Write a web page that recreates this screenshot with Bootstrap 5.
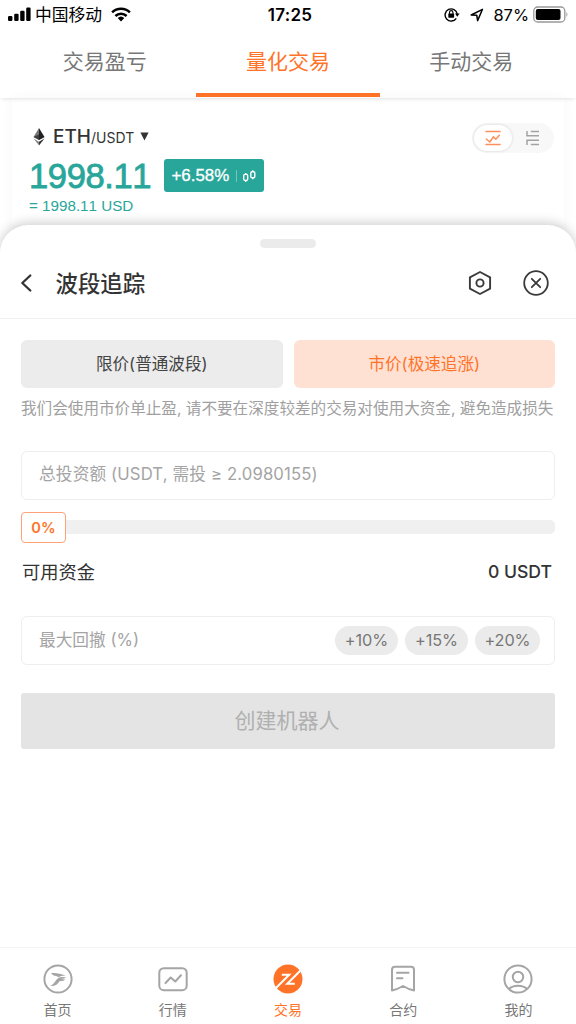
<!DOCTYPE html>
<html lang="zh-CN">
<head>
<meta charset="utf-8">
<meta name="viewport" content="width=device-width, initial-scale=1">
<title>波段追踪</title>
<link href="https://cdn.jsdelivr.net/npm/bootstrap@5.3.0/dist/css/bootstrap.min.css" rel="stylesheet">
<style>
:root{--brand:#ff7329;--up:#29a69a}
html,body{height:100%}
body{font-family:Inter,"Noto Sans CJK SC",sans-serif;color:#333;background:#fff;overflow:hidden}
svg{display:block;flex:none}
.screen{height:1024px;width:576px}
.status{height:29px;color:#000;font-size:17px;line-height:29px;padding:0 7px 0 8px}
.status .side{flex:1 1 0}
.status .clock{font-weight:600;letter-spacing:.25px;padding:1px 0 0 3px}
.status .carrier{margin-left:4px;font-size:16.8px;padding-top:2px}
.status .level{margin-left:9px;font-size:16.4px;padding-top:1px}
.toptabs{height:69px;padding:0 13px;box-shadow:0 3px 4px -2px rgba(0,0,0,.12);z-index:1}
.toptabs a{flex:1 1 0;text-align:center;font:400 21px/63px "Noto Sans CJK SC",sans-serif;color:#777;border-bottom:4px solid transparent;text-decoration:none;height:68px}
.toptabs a.active{color:var(--brand);border-color:var(--brand)}
.quote{height:127px;padding:24px 10px 0 17px;margin:0 12px;box-shadow:0 0 12px rgba(0,0,0,.035)}
.helv{font-family:"Liberation Sans",Arial,sans-serif;font-kerning:none}
.pair{font-size:19px;line-height:26px;font-weight:500}
.pair small{font-size:14px;font-weight:400}
.price{font-size:34.6px;line-height:36px;color:var(--up);letter-spacing:-.4px;-webkit-text-stroke:.8px var(--up);width:134.500px;padding-top:1px}
.change{background:var(--up);color:#fff;width:100px;height:33px;border-radius:3px;font-size:16.9px;padding:1px 7px 0 8px;-webkit-text-stroke:.3px #fff}
.usd{color:var(--up);font-size:15.2px;line-height:20px;padding-top:2px}
.switcher{width:82px;height:30px;border-radius:15px;background:#f8f8f8;margin-top:1px}
.switcher .on{width:38px;height:26px;border-radius:13px;background:#fff;box-shadow:0 0 3px rgba(0,0,0,.16);margin-left:2px}
.sheet{flex:1;background:#fff;border-radius:28px 28px 0 0;box-shadow:0 -2px 12px rgba(0,0,0,.2);z-index:2}
.grip{width:56px;height:8.5px;border-radius:5px;background:#ebebeb;margin:14px auto 0}
.sheet-head{height:71px;border-bottom:1.5px solid #f1f1f1;padding:0 27px 0 20px}
.sheet-head h1{font:500 22.4px/32px "Noto Sans CJK SC",sans-serif;margin:-1px 0 0 21.5px}
.form-area{padding:21px 21px 0}
.mode{height:48.5px;border-radius:6px;background:#ececec;font-size:16.6px;border:0;flex:1;padding:2px 0 0;color:#444}
.mode.active{background:#ffe1d4;color:var(--brand)}
.hint{font-size:15.6px;line-height:24px;color:#a0a0a0;white-space:nowrap;margin:9px 0 30px}
.field{height:48.5px;border:1.5px solid #eee;border-radius:6px;padding:0 14px 0 17px;color:#a4a4a4;font-size:16.7px;line-height:44px}
.invest{letter-spacing:.13px}
.slider{height:31px;margin-top:12px}
.knob{width:45px;height:31px;border:1.3px solid #ffa277;border-radius:4px;color:var(--brand);font-size:14.6px;font-weight:600;line-height:30px;text-align:center}
.track{flex:1;height:14px;background:#f0f0f0;border-radius:0 5px 5px 0}
.funds{height:28px;margin-top:16px;padding:0 3px 0 1px;font-size:18.3px}
.funds strong{font-size:17.6px;font-weight:500}
.retrace{margin-top:29.5px}
.pill{height:28.5px;border-radius:15px;background:#ebebeb;color:#777;line-height:29px;text-align:center;font-size:16.3px;letter-spacing:-.1px;width:63px}
.create{height:56px;background:#e4e4e4;color:#b0b0b0;border:0;border-radius:3px;font-size:21px;width:100%;margin-top:28px;padding:1px 2px 0 0}
.tabbar{height:77px;border-top:1.3px solid #f4f4f4;background:#fff;z-index:3}
.tabbar a{flex:1 1 0;text-decoration:none;color:#777;font-size:14px;line-height:20px;padding-top:15px}
.tabbar a span{margin-top:5px}
.tabbar a svg{color:#a5a5a5}
.tabbar a.active,.tabbar a.active svg{color:var(--brand)}
</style>
</head>
<body>
<div class="screen d-flex flex-column">
  <header class="status d-flex align-items-center">
    <div class="side d-flex align-items-center">
      <svg width="23" height="15" viewBox="0 0 23 15"><g fill="#000"><rect x="0" y="9" width="4.4" height="5" rx="1.2"/><rect x="6.2" y="6.7" width="4.4" height="7.3" rx="1.2"/><rect x="12.2" y="3.8" width="4.4" height="10.2" rx="1.2"/><rect x="18.2" y="0.5" width="4.4" height="13.5" rx="1.2"/></g></svg>
      <span class="carrier">中国移动</span>
      <svg style="margin-left:9px" width="20" height="15" viewBox="0 0 20 15"><g fill="none" stroke="#000" stroke-width="2.5"><path d="M1.1 5.4a12.7 12.7 0 0 1 17.8 0"/><path d="M4.4 9a8 8 0 0 1 11.2 0"/></g><path d="M6.7 11.1a4.8 4.8 0 0 1 6.6 0L10 14.5z"/></svg>
    </div>
    <div class="clock">17:25</div>
    <div class="side d-flex align-items-center justify-content-end">
      <svg width="17" height="15" viewBox="0 0 17 15"><path d="M12.300 11.300A6.1 6.1 0 1 1 13.2 7" fill="none" stroke="#000" stroke-width="1.4"/><path d="M11 6.500h4.600l-2.300 3.200z"/><rect x="4.300" y="6.500" width="5.800" height="4.200" rx=".6"/><path d="M5.500 7V5.300a1.700 1.700 0 0 1 3.400 0V7" fill="none" stroke="#000" stroke-width="1.1"/></svg>
      <svg style="margin-left:9px" width="14" height="14" viewBox="0 0 14 14"><path d="M1.2 7 12.5 1.3 7.6 12.6 6.8 7.3z" fill="none" stroke="#000" stroke-width="1.5" stroke-linejoin="round"/></svg>
      <span class="level">87%</span>
      <svg style="margin-left:4px" width="36" height="17" viewBox="0 0 36 17"><rect x=".8" y="1" width="31" height="15" rx="3.8" fill="none" stroke="#999" stroke-width="1.3"/><rect x="2.8" y="3" width="24.7" height="11" rx="2"/><path d="M33.4 6q2 2.5 0 5z" fill="#999"/></svg>
    </div>
  </header>

  <nav class="toptabs d-flex position-relative">
    <a href="#">交易盈亏</a><a href="#" class="active">量化交易</a><a href="#">手动交易</a>
  </nav>

  <section class="quote">
    <div class="d-flex justify-content-between">
      <div class="pair d-flex align-items-center">
        <svg style="margin-left:4px;margin-right:8px;margin-bottom:2px" width="12" height="18" viewBox="0 0 12 18"><path d="M6 0 .5 9 6 12z" fill="#777"/><path d="M6 0 11.5 9 6 12z" fill="#222"/><path d="M6 6.5.5 9 6 12l5.5-3z" fill="#222" opacity=".65"/><path d="M.5 10.5 6 17.5v-3.7z" fill="#888"/><path d="M11.5 10.5 6 17.5v-3.7z" fill="#333"/></svg>
        <div>ETH<small>/USDT</small></div>
        <svg style="margin-left:6px;margin-bottom:2px" width="9" height="9" viewBox="0 0 9 9"><path d="M.4.5h8.2L4.5 8.5z" fill="#333"/></svg>
      </div>
      <div class="switcher d-flex align-items-center">
        <div class="on d-flex align-items-center justify-content-center">
          <svg width="16" height="16" viewBox="0 0 16 16" fill="none" stroke="#ff8e5c" stroke-width="1.5" stroke-linecap="round" stroke-linejoin="round"><path d="M1 1.6h14M1 14.4h14M1.3 9l3.5 3 3.7-5.3 2.3 2.5 3.6-4"/></svg>
        </div>
        <svg style="margin-left:14px" width="14" height="16" viewBox="0 0 14 16" fill="none" stroke="#a2a2a2" stroke-width="1.5"><path d="M1 1v4.800h12M1 15v-4.800h12M4.800 1.500H13M4.800 14.500H13"/></svg>
      </div>
    </div>
    <div class="d-flex align-items-center helv" style="margin-top:4px">
      <div class="price">1998.11</div>
      <div class="change d-flex align-items-center"><span>+6.58%</span>
        <svg class="ms-auto" width="22" height="15" viewBox="0 0 22 15" fill="none" stroke="#fff"><path d="M1.500 1v12" stroke-width=".8" opacity=".45"/><g stroke-width="1.4"><rect x="8.7" y="5.400" width="4" height="6" rx="1.3"/><rect x="15.8" y="2.700" width="4" height="6" rx="1.3"/><path d="M10.700 3.900v1.500m0 6v1.500M17.800 1.200v1.500m0 6v1.500"/></g></svg>
      </div>
    </div>
    <div class="usd helv">= 1998.11 USD</div>
  </section>

  <main class="sheet position-relative">
    <div class="d-flex"><div class="grip"></div></div>
    <div class="sheet-head d-flex align-items-center">
      <svg width="14" height="20" viewBox="0 0 14 20"><path d="M10.3 2.500 2.300 10l8 7.500" fill="none" stroke="#333" stroke-width="2.300" stroke-linecap="round" stroke-linejoin="round"/></svg>
      <h1>波段追踪</h1>
      <svg class="ms-auto" width="24" height="26" viewBox="0 0 24 26" fill="none" stroke="#3a3a3a" stroke-width="1.9" stroke-linejoin="round"><path d="m12 2 10.1 5.3v11.4L12 24 1.9 18.7V7.3z"/><circle cx="12" cy="13" r="3.6"/></svg>
      <svg style="margin-left:31px" width="26" height="26" viewBox="0 0 26 26" fill="none" stroke="#3a3a3a" stroke-width="1.8" stroke-linecap="round"><circle cx="13" cy="13" r="11.8"/><path d="m8.8 8.8 8.4 8.4m0-8.4-8.4 8.4"/></svg>
    </div>
    <div class="form-area">
      <div class="d-flex" style="gap:11px">
        <button class="mode">限价(普通波段)</button>
        <button class="mode active">市价(极速追涨)</button>
      </div>
      <p class="hint">我们会使用市价单止盈, 请不要在深度较差的交易对使用大资金, 避免造成损失</p>
      <div class="field invest">总投资额 (USDT, 需投 ≥ 2.0980155)</div>
      <div class="slider d-flex align-items-center"><div class="knob">0%</div><div class="track"></div></div>
      <div class="funds d-flex align-items-center justify-content-between"><span>可用资金</span><strong>0 USDT</strong></div>
      <div class="field retrace d-flex align-items-center">
        <span class="me-auto">最大回撤 (%)</span>
        <div class="d-flex" style="gap:7px"><div class="pill">+10%</div><div class="pill">+15%</div><div class="pill" style="width:65px">+20%</div></div>
      </div>
      <button class="create">创建机器人</button>
    </div>
  </main>

  <nav class="tabbar d-flex position-relative">
    <a href="#" class="d-flex flex-column align-items-center">
      <svg width="32" height="32" viewBox="0 0 32 32"><circle cx="16" cy="16" r="13.6" fill="none" stroke="currentColor" stroke-width="2"/><path d="M9 10.300c4.500-.6 9 .2 14.800 2.500-3.400-.1-5.300.2-7.100 1.500-2.300-1.900-5.200-.8-7.700-4zM8.300 23c4.700-2 5.200-7.300 9.700-8.700 2.100-.6 4.100 0 6.100 0-1.700 1.700-3.300 1.500-5.300 1.700l4.300.5c-1.700 2-3.600 1.300-5.600 1.800-2 3-4.500 5.200-9.200 4.700z" fill="currentColor"/></svg>
      <span>首页</span></a>
    <a href="#" class="d-flex flex-column align-items-center">
      <svg width="32" height="32" viewBox="0 0 32 32" fill="none" stroke="currentColor" stroke-width="2" stroke-linecap="round" stroke-linejoin="round"><rect x="2.300" y="5.200" width="27.400" height="22" rx="4.500"/><path d="m8.500 20 5.200-5.500 4.600 4L24 12.300"/></svg>
      <span>行情</span></a>
    <a href="#" class="active d-flex flex-column align-items-center">
      <svg width="32" height="32" viewBox="0 0 32 32"><circle cx="16" cy="16" r="14.500" fill="currentColor"/><g fill="none" stroke="#fff" stroke-width="2"><path d="M4 25 17.200 11.800H9.800M28.500 7.500 15.300 20.700h7.500"/></g></svg>
      <span>交易</span></a>
    <a href="#" class="d-flex flex-column align-items-center">
      <svg width="32" height="32" viewBox="0 0 32 32" fill="none" stroke="currentColor" stroke-width="2" stroke-linecap="round" stroke-linejoin="round"><path d="M5 27.500V6.700a3 3 0 0 1 3-3h16a3 3 0 0 1 3 3v20.800q-5.500-1.200-11-4.500-5.500 3.300-11 4.500zM10 9.700h11.500M10 15.300h5.500"/></svg>
      <span>合约</span></a>
    <a href="#" class="d-flex flex-column align-items-center">
      <svg width="32" height="32" viewBox="0 0 32 32" fill="none" stroke="currentColor" stroke-width="2"><circle cx="16" cy="16" r="13.600"/><circle cx="16" cy="14" r="5.200"/><path d="M6.800 26c4.500-4.300 13.900-4.300 18.400 0"/></svg>
      <span>我的</span></a>
  </nav>
</div>
<script src="https://cdn.jsdelivr.net/npm/bootstrap@5.3.0/dist/js/bootstrap.bundle.min.js"></script>
</body>
</html>
